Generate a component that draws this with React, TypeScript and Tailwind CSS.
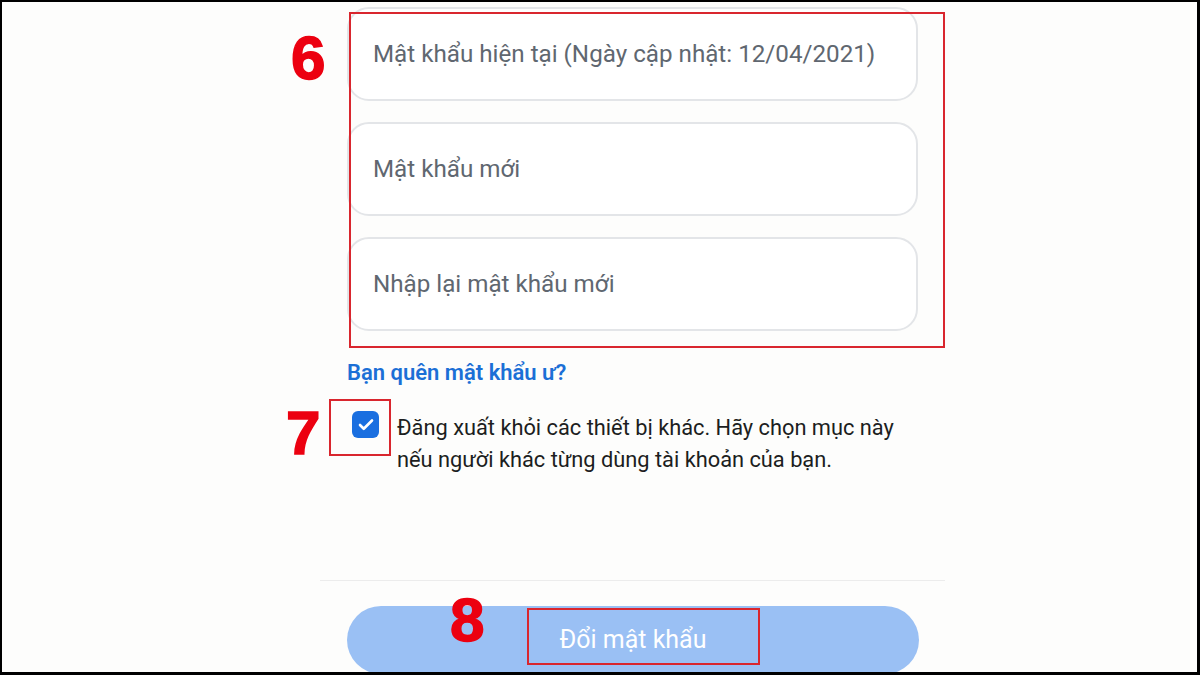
import { Check } from "lucide-react";

const fields = [
  "Mật khẩu hiện tại (Ngày cập nhật: 12/04/2021)",
  "Mật khẩu mới",
  "Nhập lại mật khẩu mới",
];

function Marker({ n, className }: { n: string; className: string }) {
  return (
    <div
      className={`absolute text-[62px] leading-none font-bold text-[#ec0010] [-webkit-text-stroke:1.5px_#ec0010] ${className}`}
      style={{ fontFamily: "'Liberation Sans', Arial, sans-serif" }}
    >
      {n}
    </div>
  );
}

export default function App() {
  return (
    <div
      className="relative w-[1200px] h-[675px] overflow-hidden bg-[#fdfdfc] border-t-2 border-l-2 border-r-[3px] border-b-[3px] border-black"
      style={{ fontFamily: "Roboto, 'Noto Sans', sans-serif" }}
    >
      <div className="ml-[318px] w-[625px] h-full flex flex-col">
        {/* Password inputs */}
        <div className="pt-[5px] px-[27px] flex flex-col gap-[21px]">
          {fields.map((label) => (
            <div
              key={label}
              className="h-[94px] w-[571px] rounded-[22px] border-2 border-[#e3e5e8] bg-white flex items-center pl-[24px] text-[24.2px] text-[#606770]"
            >
              {label}
            </div>
          ))}
        </div>

        <div className="px-[27px] mt-[29px] text-[22px] leading-[26px] font-semibold text-[#1b6fd6]">
          Bạn quên mật khẩu ư?
        </div>

        {/* Log out of other devices */}
        <div className="px-[27px] mt-[25px] flex items-start">
          <div className="ml-[5px] w-[27px] h-[27px] rounded-[6px] bg-[#1a6fe0] flex items-center justify-center shrink-0">
            <Check className="w-[18px] h-[18px] text-white" strokeWidth={3.5} />
          </div>
          <p className="ml-[18px] mt-[1px] text-[21.8px] leading-[32px] text-[#1c1e21] w-[505px]">
            Đăng xuất khỏi các thiết bị khác. Hãy chọn mục này nếu người khác từng dùng tài khoản của bạn.
          </p>
        </div>

        <div className="mt-auto border-t border-[#ececec]" />
        <div className="px-[27px] pt-[25px] -mb-[2px]">
          <div className="h-[68px] w-[572px] rounded-full bg-[#9ac0f4] flex items-center justify-center text-[25px] text-white">
            Đổi mật khẩu
          </div>
        </div>
      </div>

      {/* Step annotations */}
      <div className="absolute left-[347px] top-[10px] w-[596px] h-[336px] border-2 border-[#d9262e]" />
      <div className="absolute left-[327px] top-[397px] w-[62px] h-[57px] border-2 border-[#d9262e]" />
      <div className="absolute left-[525px] top-[606px] w-[233px] h-[57px] border-2 border-[#d9262e]" />
      <Marker n="6" className="left-[289px] top-[25px]" />
      <Marker n="7" className="left-[284px] top-[400px]" />
      <Marker n="8" className="left-[448px] top-[587px]" />
    </div>
  );
}
